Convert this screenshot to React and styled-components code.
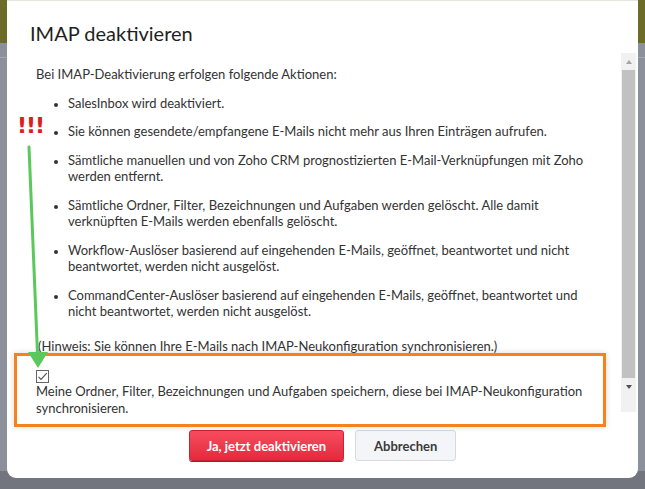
import React from "react";
import styled, { createGlobalStyle } from "styled-components";

const GlobalStyle = createGlobalStyle`
  body {
    margin: 0;
    background: #8c909b;
    font-family: Lato, "Open Sans", Arial, sans-serif;
  }
`;

const actions = [
  "SalesInbox wird deaktiviert.",
  "Sie können gesendete/empfangene E-Mails nicht mehr aus Ihren Einträgen aufrufen.",
  "Sämtliche manuellen und von Zoho CRM prognostizierten E-Mail-Verknüpfungen mit Zoho werden entfernt.",
  "Sämtliche Ordner, Filter, Bezeichnungen und Aufgaben werden gelöscht. Alle damit verknüpften E-Mails werden ebenfalls gelöscht.",
  "Workflow-Auslöser basierend auf eingehenden E-Mails, geöffnet, beantwortet und nicht beantwortet, werden nicht ausgelöst.",
  "CommandCenter-Auslöser basierend auf eingehenden E-Mails, geöffnet, beantwortet und nicht beantwortet, werden nicht ausgelöst.",
];

export default function App() {
  return (
    <>
      <GlobalStyle />
      <Backdrop>
        <Modal>
          <Header>
            <Title>IMAP deaktivieren</Title>
          </Header>
          <Body>
            <ScrollContent>
              <Intro>Bei IMAP-Deaktivierung erfolgen folgende Aktionen:</Intro>
              <ActionList>
                {actions.map((a) => (
                  <li key={a}>{a}</li>
                ))}
              </ActionList>
              <Note>(Hinweis: Sie können Ihre E-Mails nach IMAP-Neukonfiguration synchronisieren.)</Note>
              <KeepOption>
                <CheckBox>
                  <svg width="11" height="9" viewBox="0 0 11 9">
                    <path d="M1.5 4.8 L4 7.3 L9.8 1.2" fill="none" stroke="#555" strokeWidth="1.2" />
                  </svg>
                </CheckBox>
                <span>
                  Meine Ordner, Filter, Bezeichnungen und Aufgaben speichern, diese bei IMAP-Neukonfiguration
                  synchronisieren.
                </span>
              </KeepOption>
            </ScrollContent>
            <Scrollbar>
              <ScrollButton>
                <Arrow $up />
              </ScrollButton>
              <Thumb />
              <ScrollButton>
                <Arrow />
              </ScrollButton>
            </Scrollbar>
          </Body>
          <Footer>
            <Button $primary>Ja, jetzt deaktivieren</Button>
            <Button>Abbrechen</Button>
          </Footer>
        </Modal>

        {/* annotations drawn over the screenshot */}
        <Alert>!!!</Alert>
        <Highlight />
        <Pointer width="645" height="489" viewBox="0 0 645 489">
          <line x1="29" y1="147" x2="37.5" y2="354" stroke="#5ac85a" strokeWidth="3" strokeLinecap="round" />
          <polygon points="28,352 48,352 38,368" fill="#5ac85a" />
        </Pointer>
      </Backdrop>
    </>
  );
}

const Backdrop = styled.div`
  position: relative;
  width: 645px;
  height: 489px;
  box-sizing: border-box;
  padding: 0 7px;
  overflow: hidden;
  background: linear-gradient(
    #6c6c28 0,
    #6c6c28 43px,
    #8c909b 43px,
    #8c909b 57px,
    #a3a7b0 57px,
    #a3a7b0 58px,
    #8c909b 58px,
    #8c909b 471px,
    #72757e 471px
  );
`;

const Modal = styled.div`
  height: 478px;
  background: #fff;
  border-top: 1px solid #e6e6da;
  box-sizing: border-box;
  border-radius: 0 0 9px 9px;
  display: flex;
  flex-direction: column;
`;

const Header = styled.div`
  height: 52px;
  padding: 20px 0 0 23px;
  box-sizing: border-box;
`;

const Title = styled.h2`
  margin: 0;
  font-size: 20px;
  font-weight: 400;
  color: #1f1f1f;
  line-height: 25px;
`;

const Body = styled.div`
  display: flex;
  height: 359px;
  margin: 0 2px 0 23px;
`;

const ScrollContent = styled.div`
  flex: 1;
  height: 362px;
  overflow: hidden;
  padding: 13px 20px 0 6px;
  font-size: 13px;
  line-height: 16.5px;
  color: #333;
`;

const Intro = styled.p`
  margin: 0;
`;

const ActionList = styled.ul`
  margin: 12px 0 0;
  padding-left: 32px;

  li {
    margin-bottom: 12px;
  }
  li::marker {
    color: #333;
    font-size: 11px;
  }
`;

const Note = styled.p`
  margin: 18px 0 0 2px;
`;

const KeepOption = styled.label`
  display: block;
  margin-top: 16px;
  line-height: 16.5px;
`;

const CheckBox = styled.span`
  display: flex;
  align-items: center;
  justify-content: center;
  width: 11px;
  height: 11px;
  border: 1px solid #666;
`;

const Scrollbar = styled.div`
  width: 15px;
  display: flex;
  flex-direction: column;
  background: #f1f1f1;
`;

const ScrollButton = styled.div`
  height: 17px;
  display: flex;
  align-items: center;
  justify-content: center;
`;

const Arrow = styled.span`
  width: 0;
  height: 0;
  border-left: 3.5px solid transparent;
  border-right: 3.5px solid transparent;
  ${(p) => (p.$up ? "border-bottom: 4px solid #a3a3a3;" : "border-top: 4px solid #505050;")}
`;

const Thumb = styled.div`
  height: 308px;
  margin: 0 1px;
  background: #c1c1c1;
`;

const Footer = styled.div`
  display: flex;
  justify-content: center;
  gap: 11px;
  padding-top: 18px;
`;

const Button = styled.button`
  height: 31px;
  padding: 0 ${(p) => (p.$primary ? "17px" : "18px")};
  border-radius: 3px;
  font-family: Lato, Arial, sans-serif;
  font-size: 13px;
  font-weight: 700;
  cursor: pointer;
  color: ${(p) => (p.$primary ? "#fff" : "#3a3a3a")};
  background: ${(p) => (p.$primary ? "linear-gradient(#f84d5f, #e22a3d)" : "#f4f5f8")};
  border: 1px solid ${(p) => (p.$primary ? "#cd2034" : "#d6d9df")};
  box-shadow: ${(p) => (p.$primary ? "0 1px 0 #a81a2a" : "none")};
`;

const Alert = styled.div`
  position: absolute;
  left: 17px;
  top: 113px;
  font-family: "DejaVu Sans", sans-serif;
  font-weight: 700;
  font-size: 22px;
  letter-spacing: -1px;
  color: #e01b1b;
`;

const Highlight = styled.div`
  position: absolute;
  left: 14px;
  top: 353px;
  width: 592px;
  height: 74px;
  box-sizing: border-box;
  border: 3px solid #f5821f;
  box-shadow: 0 0 6px rgba(0, 0, 0, 0.15);
`;

const Pointer = styled.svg`
  position: absolute;
  left: 0;
  top: 0;
  pointer-events: none;
`;
